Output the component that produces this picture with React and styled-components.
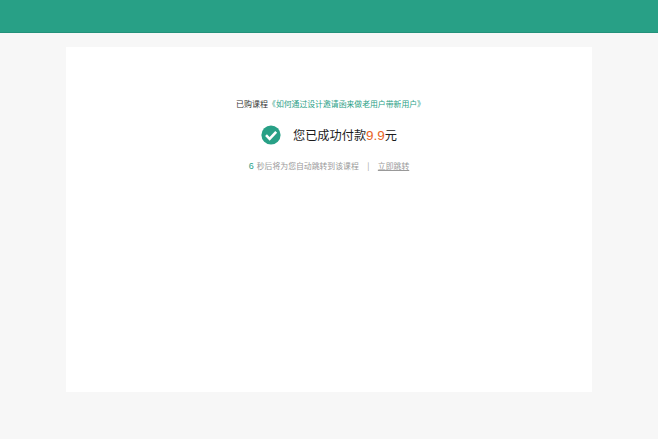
import React from "react";
import styled, { createGlobalStyle } from "styled-components";

const Global = createGlobalStyle`
  html, body { margin: 0; padding: 0; }
  body {
    background: #f7f7f7;
    font-family: "Noto Sans CJK SC", "Liberation Sans", sans-serif;
  }
`;

const Header = styled.header`
  box-sizing: border-box;
  height: 33px;
  background: #28a086;
  border-bottom: 1px solid #23917a;
`;

const Panel = styled.main`
  box-sizing: border-box;
  width: 526px;
  height: 345px;
  margin: 14px auto 0;
  padding-top: 51px;
  background: #fff;
  display: flex;
  flex-direction: column;
  align-items: center;
`;

const Course = styled.div`
  padding-left: 3px;
  font-size: 8px;
  line-height: 12px;
  color: #333;
`;

const CourseName = styled.span`
  font-size: 7.85px;
  color: #28a086;
`;

const Result = styled.div`
  display: flex;
  align-items: center;
  gap: 12px;
  margin-top: 13px;
  height: 24px;
  font-size: 12.2px;
  color: #1c1c1c;
`;

const Price = styled.span`
  font-family: "Liberation Sans", sans-serif;
  font-size: 13.5px;
  color: #e8641e;
`;

const Hint = styled.div`
  display: flex;
  align-items: center;
  margin-top: 13px;
  font-size: 7.85px;
  line-height: 12px;
  color: #999;
`;

const Count = styled.span`
  margin-right: 3px;
  font-family: "Liberation Sans", sans-serif;
  font-size: 9px;
  color: #28a086;
`;

const Divider = styled.span`
  margin: 0 8.5px;
  color: #999;
`;

const JumpLink = styled.a`
  color: #999;
  text-decoration: underline;
`;

const CheckIcon = () => (
  <svg width="20" height="20" viewBox="0 0 20 20">
    <circle cx="10" cy="10" r="9.6" fill="#28a086" />
    <path d="M5 10.2l3.6 3.6L15.2 6.8" fill="none" stroke="#fff" strokeWidth="2.6" />
  </svg>
);

export default function App() {
  return (
    <>
      <Global />
      <Header />
      <Panel>
        <Course>
          已购课程<CourseName>《如何通过设计邀请函来做老用户带新用户》</CourseName>
        </Course>
        <Result>
          <CheckIcon />
          <span>
            您已成功付款<Price>9.9</Price>元
          </span>
        </Result>
        <Hint>
          <Count>6</Count>
          <span>秒后将为您自动跳转到该课程</span>
          <Divider>|</Divider>
          <JumpLink>立即跳转</JumpLink>
        </Hint>
      </Panel>
    </>
  );
}
